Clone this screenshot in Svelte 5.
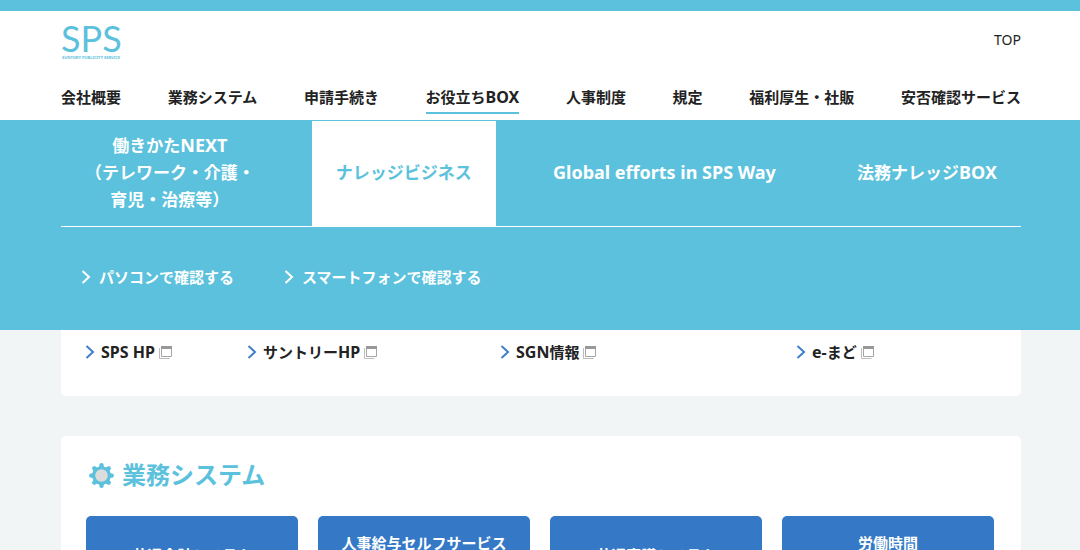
<script>
  const nav = ['会社概要', '業務システム', '申請手続き', 'お役立ちBOX', '人事制度', '規定', '福利厚生・社販', '安否確認サービス'];
  const current = 'お役立ちBOX';
  const tabs = [
    ['働きかたNEXT', '（テレワーク・介護・', '育児・治療等）'],
    ['ナレッジビジネス'],
    ['Global efforts in SPS Way'],
    ['法務ナレッジBOX']
  ];
  const activeTab = 1;
  const subLinks = ['パソコンで確認する', 'スマートフォンで確認する'];
  const quickLinks = ['SPS HP', 'サントリーHP', 'SGN情報', 'e-まど'];
  const systems = [
    { label: '共通会計システム', top: false },
    { label: '人事給与セルフサービス', top: true },
    { label: '共通稟議システム', top: false },
    { label: '労働時間', top: true }
  ];

  // Splits a label into runs of Latin and Japanese text.
  const runs = (text) => text.match(/[\x20-\x7e]+|[^\x20-\x7e]+/g);
  const isLatin = (run) => /^[\x20-\x7e]/.test(run);
</script>

{#snippet chevron()}
  <svg class="chevron" viewBox="0 0 10 14" aria-hidden="true">
    <path d="M1.5 1 L8 7 L1.5 13" fill="none" stroke="currentColor" stroke-width="2" />
  </svg>
{/snippet}

{#snippet label(text)}
  <span class="label">{#each runs(text) as run}{#if isLatin(run)}<span class="latin">{run}</span>{:else}{run}{/if}{/each}</span>
{/snippet}

<header>
  <div class="wrap brand">
    <a class="logo" href="#top">
      <span class="logo-name">SPS</span>
      <span class="logo-sub">SUNTORY PUBLICITY SERVICE</span>
    </a>
    <a class="top-link" href="#top">TOP</a>
  </div>
  <nav class="wrap">
    {#each nav as item}
      <a href="#menu" class:current={item === current}>{@render label(item)}</a>
    {/each}
  </nav>
  <div class="mega">
    <div class="tabs">
      {#each tabs as lines, i}
        <a href="#tab" class:active={i === activeTab}>
          {#each lines as line}{@render label(line)}{/each}
        </a>
      {/each}
    </div>
    <div class="sub">
      {#each subLinks as link}
        <a href="#sub">{@render chevron()}{link}</a>
      {/each}
    </div>
  </div>
</header>

<main class="wrap">
  <section class="card quick">
    {#each quickLinks as link}
      <a href="#link">
        {@render chevron()}{@render label(link)}
        <svg class="window" viewBox="0 0 13 13" aria-hidden="true">
          <path d="M0.5 2 V12.5 H10.5" fill="none" stroke="#bdbdbd" />
          <path d="M2.5 1 V10.5 H12.5 V1" fill="none" stroke="#a6a6a6" />
          <path d="M2 0 H13 V3 H2 Z" fill="#999" />
        </svg>
      </a>
    {/each}
  </section>

  <section class="card systems">
    <h2>
      <svg class="gear" viewBox="-12 -12 24 24" aria-hidden="true">
        <g fill="#5bc1dc">
          {#each [0, 45, 90, 135, 180, 225, 270, 315] as angle}
            <path d="M-2.4 -8 L-1.8 -11.2 Q0 -12.6 1.8 -11.2 L2.4 -8 Z" transform="rotate({angle})" />
          {/each}
          <circle r="9" />
        </g>
        <circle r="6" fill="#dcdcdc" />
      </svg>
      業務システム
    </h2>
    <div class="grid">
      {#each systems as system}
        <a href="#system" class:top={system.top}>{system.label}</a>
      {/each}
    </div>
  </section>
</main>

<style>
  :global(body) {
    margin: 0;
    background: #f1f5f6;
    color: #222;
    font: 700 15px/24px "Noto Sans", "Noto Sans CJK JP", sans-serif;
  }
  a {
    color: inherit;
    text-decoration: none;
  }
  .wrap {
    padding: 0 59px 0 61px;
  }
  .latin {
    font-size: 16px;
    line-height: 20px;
  }
  header {
    position: relative;
    z-index: 1;
    border-top: 11px solid #5bc1dc;
    background: #fff;
  }
  .brand {
    display: flex;
    justify-content: space-between;
    padding-top: 11px;
  }
  .logo {
    display: flex;
    flex-direction: column;
    height: 62px;
    color: #5bc1dc;
    white-space: nowrap;
  }
  .logo-name {
    font: 400 36px/32px Lato, sans-serif;
  }
  .logo-sub {
    padding: 1px 0 0 1px;
    font: 700 4px/6px "Noto Sans", sans-serif;
  }
  .top-link {
    padding-top: 6px;
    font-size: 14px;
    font-weight: 400;
  }
  nav {
    display: flex;
    justify-content: space-between;
    height: 36px;
    white-space: nowrap;
  }
  nav a {
    height: 28px;
    line-height: 26px;
  }
  .current {
    border-bottom: 2px solid #5bc1dc;
  }
  .mega {
    position: absolute;
    top: 100%;
    left: 0;
    right: 0;
    padding: 1px 59px 41px 61px;
    background: #5bc1dc;
    color: #fff;
  }
  .tabs {
    display: flex;
    justify-content: space-between;
    border-bottom: 1px solid #fff;
    font-size: 17px;
    line-height: 27px;
    text-align: center;
    white-space: nowrap;
  }
  .tabs a {
    display: flex;
    flex-direction: column;
    justify-content: center;
    padding: 11px 24px 13px;
  }
  .tabs :global(.latin) {
    font-size: 18px;
  }
  .tabs .active {
    background: #fff;
    color: #5bc1dc;
  }
  .sub {
    display: flex;
    gap: 50px;
    padding: 38px 20px 0;
  }
  .sub a,
  .quick a {
    display: flex;
    align-items: center;
    white-space: nowrap;
  }
  .chevron {
    width: 10px;
    height: 14px;
    margin-right: 8px;
  }
  .card {
    border-radius: 5px;
    background: #fff;
  }
  .quick {
    display: grid;
    grid-template-columns: 162fr 253fr 296fr 199fr;
    margin-bottom: 40px;
    padding: 220px 26px 32px 24px;
  }
  .quick .chevron {
    margin-right: 6px;
    color: #3f7fcb;
  }
  .window {
    width: 13px;
    height: 13px;
    margin-left: 4px;
  }
  .systems {
    padding: 20px 27px 32px 25px;
  }
  h2 {
    display: flex;
    align-items: center;
    gap: 8px;
    margin: 0 0 22px;
    padding-left: 3px;
    color: #5bc1dc;
    font-size: 24px;
    line-height: 38px;
  }
  .gear {
    width: 25px;
    height: 25px;
  }
  .grid {
    display: grid;
    grid-template-columns: repeat(4, 1fr);
    gap: 20px;
  }
  .grid a {
    display: flex;
    align-items: center;
    justify-content: center;
    box-sizing: border-box;
    min-height: 78px;
    padding: 15px 8px;
    border-radius: 5px;
    background: #3579c6;
    color: #fff;
  }
  .grid .top {
    align-items: flex-start;
  }
</style>
